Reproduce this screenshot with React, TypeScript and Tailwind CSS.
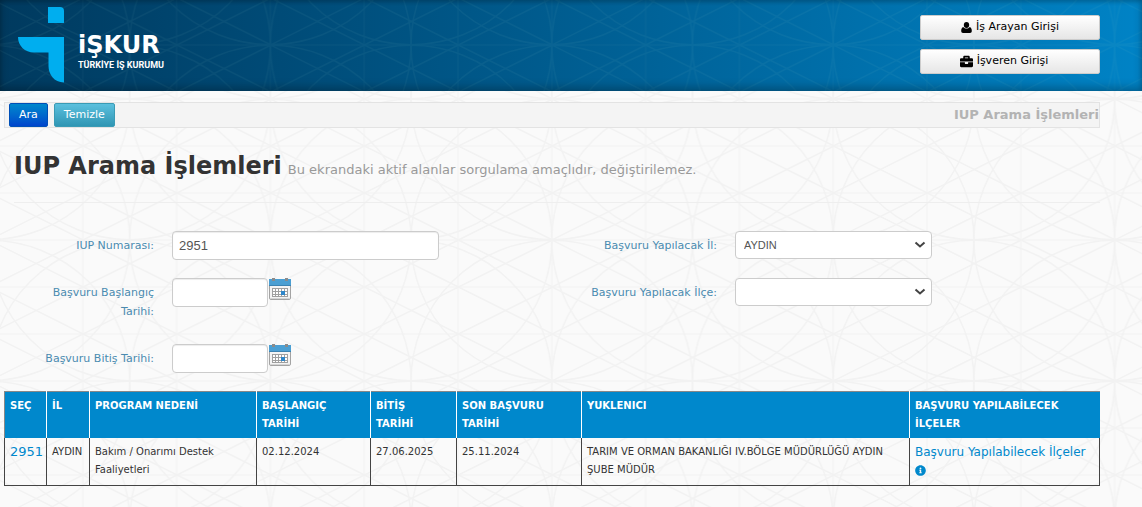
import { useState } from 'react';
import type { ReactNode } from 'react';
import { FaBriefcase, FaInfoCircle } from 'react-icons/fa';

interface Program {
  id: string;
  city: string;
  reason: string;
  startDate: string;
  endDate: string;
  deadline: string;
  contractor: string;
}

const programs: Program[] = [
  {
    id: '2951',
    city: 'AYDIN',
    reason: 'Bakım / Onarımı Destek Faaliyetleri',
    startDate: '02.12.2024',
    endDate: '27.06.2025',
    deadline: '25.11.2024',
    contractor: 'TARIM VE ORMAN BAKANLIĞI IV.BÖLGE MÜDÜRLÜĞÜ AYDIN ŞUBE MÜDÜR',
  },
];

const columns = [
  { title: 'SEÇ', width: 'w-[42px]' },
  { title: 'İL', width: 'w-[43px]' },
  { title: 'PROGRAM NEDENİ', width: 'w-[167px]' },
  { title: 'BAŞLANGIÇ TARİHİ', width: 'w-[114px] pr-4' },
  { title: 'BİTİŞ TARİHİ', width: 'w-[86px] pr-4' },
  { title: 'SON BAŞVURU TARİHİ', width: 'w-[125px]' },
  { title: 'YUKLENICI', width: '' },
  { title: 'BAŞVURU YAPILABİLECEK İLÇELER', width: 'w-[190px]' },
];

// Repeating geometric line ornament, used under the header and the page
function Ornament({ id, top, className }: { id: string; top: number; className: string }) {
  return (
    <svg className={`absolute inset-0 h-full w-full ${className}`} aria-hidden="true">
      <defs>
        <pattern id={id} x="-11" y={top} width="281.4" height="141" patternUnits="userSpaceOnUse">
          <g fill="none" stroke="currentColor">
            <g strokeWidth="1">
              <path d="M0 0V141M93.8 0V141M187.6 0V141M281.4 0V141" />
              <path d="M0 0H282M0 47H282M0 94H282M0 141H282" />
            </g>
            <g strokeWidth="1.5">
              <path d="M0 0L282 141M0 47L188 141M0 94L94 141M94 0L282 94M188 0L282 47" />
              <path d="M282 0L0 141M188 0L0 94M94 0L0 47M282 47L94 141M282 94L188 141" />
              <circle cx="0" cy="0" r="140.7" />
              <circle cx="140.7" cy="0" r="140.7" />
              <circle cx="281.4" cy="0" r="140.7" />
              <circle cx="0" cy="141" r="140.7" />
              <circle cx="140.7" cy="141" r="140.7" />
              <circle cx="281.4" cy="141" r="140.7" />
            </g>
          </g>
        </pattern>
      </defs>
      <rect width="100%" height="100%" fill={`url(#${id})`} />
    </svg>
  );
}

function Logo() {
  return (
    <a href="#" className="flex items-start text-white">
      <svg width="46" height="76" viewBox="0 0 46 76" fill="#00aeef" aria-hidden="true">
        <path d="M30 0h12q4 0 4 4v12H30z" />
        <path d="M0 30h46v45.500C36 75.500 30.500 67 30.500 59V45.500H16C7 45.500 0 39 0 30z" />
      </svg>
      <span className="ml-3.5 mt-6 flex flex-col">
        <span className="text-2xl leading-7 font-bold">iŞKUR</span>
        <span className="mt-px font-[Roboto,sans-serif] text-[9px] leading-2.5 font-bold">TÜRKİYE İŞ KURUMU</span>
      </span>
    </a>
  );
}

function UserIcon() {
  return (
    <svg width="11" height="11" viewBox="0 0 11 11" aria-hidden="true">
      <ellipse cx="5.500" cy="3" rx="2.700" ry="3" />
      <path d="M2.300 5C.8 5.400.2 7 .2 9c0 1.300.7 2 1.800 2h7c1.100 0 1.800-.7 1.800-2 0-2-.6-3.600-2.100-4C7.800 6.100 6.700 6.600 5.500 6.600S3.200 6.100 2.300 5z" />
    </svg>
  );
}

function LoginButton({ icon, className = '', children }: { icon: ReactNode; className?: string; children: ReactNode }) {
  return (
    <button
      type="button"
      className={`flex h-[25px] w-[180px] items-center justify-center gap-1 rounded-xs border border-[#ccc] bg-linear-to-b from-white to-[#e6e6e6] text-[11px] text-black ${className}`}
    >
      {icon}
      {children}
    </button>
  );
}

function CalendarIcon() {
  return (
    <svg width="22" height="22" viewBox="0 0 22 22" aria-hidden="true">
      <rect x="0.500" y="1.500" width="21" height="20" rx="1.500" fill="#f4f4f4" stroke="#a3a3a3" />
      <path d="M0 1h22v6H0z" fill="#4b9fd3" />
      <path d="M0 7h22v1H0z" fill="#3c83b2" />
      <path d="M3 0h3v3H3zM16 0h3v3h-3z" fill="#8b8b8b" />
      <path d="M3 10h16v9H3z" fill="#a0a0a0" />
      <path
        d="M4 11h2v2H4zM7 11h2v2H7zM10 11h2v2h-2zM13 11h2v2h-2zM16 11h2v2h-2zM4 14h2v2H4zM7 14h2v2H7zM10 14h2v2h-2zM16 14h2v2h-2zM4 17h2v1H4zM7 17h2v1H7zM10 17h2v1h-2zM13 17h2v1h-2zM16 17h2v1h-2z"
        fill="#fff"
      />
      <path d="M12 13h4v4h-4z" fill="#2f86c9" />
      <path d="M1 20h20v1H1z" fill="#d5d5d5" />
    </svg>
  );
}

function Field({ id, label, labelWidth, children }: { id: string; label: string; labelWidth: string; children: ReactNode }) {
  return (
    <div className="flex items-start gap-[18px]">
      <label htmlFor={id} className={`${labelWidth} pt-[5px] text-right text-[11px] leading-[19px] text-[#4a8bb0]`}>
        {label}
      </label>
      {children}
    </div>
  );
}

const inputStyle =
  'rounded border border-[#ccc] bg-white px-1.5 font-["Liberation_Sans",Arial,sans-serif] text-[13px] text-[#555] shadow-[inset_0_1px_1px_rgba(0,0,0,0.075)]';

function DateInput({ id }: { id: string }) {
  return (
    <div className="flex items-start">
      <input id={id} type="text" className={`${inputStyle} h-[29px] w-24`} />
      <button type="button" aria-label="Takvim" className="ml-px">
        <CalendarIcon />
      </button>
    </div>
  );
}

function SelectInput({ id, options }: { id: string; options: string[] }) {
  return (
    <div className="relative w-[197px]">
      <select
        id={id}
        className='h-7 w-full appearance-none rounded border border-[#ccc] bg-white px-2 font-["Liberation_Sans",Arial,sans-serif] text-[11px] text-[#555]'
      >
        {options.map(option => (
          <option key={option}>{option}</option>
        ))}
      </select>
      <svg
        className="pointer-events-none absolute top-2.5 right-1.5"
        width="12"
        height="8"
        viewBox="0 0 12 8"
        fill="none"
        stroke="#444"
        strokeWidth="2"
        aria-hidden="true"
      >
        <path d="M1.500 1.500L6 5.500l4.500-4" />
      </svg>
    </div>
  );
}

export default function App() {
  const [number, setNumber] = useState('2951');

  return (
    <div className='relative min-h-screen bg-[#fafafa] font-["DejaVu_Sans",Verdana,sans-serif] text-[#333]'>
      <Ornament id="page-lines" top={99} className="text-[#f2f2f2]" />

      {/* Header */}
      <header className="relative bg-linear-to-r from-[#003a5f] to-[#0083c6]">
        <Ornament id="header-lines" top={45} className="text-[#9fd8d0] opacity-6" />
        <div className="relative flex h-[91px] items-start justify-between pt-[7px] pr-[42px] pl-[18px] shadow-[inset_0_-4px_8px_rgba(0,0,0,0.25),inset_0_2px_4px_rgba(0,0,0,0.2)]">
          <Logo />
          <div className="flex flex-col gap-[9px] pt-2">
            <LoginButton icon={<UserIcon />}>İş Arayan Girişi</LoginButton>
            <LoginButton icon={<FaBriefcase className="size-[13px]" />} className="pr-3">
              İşveren Girişi
            </LoginButton>
          </div>
        </div>
      </header>

      <main className="relative pt-[11px] pr-[42px] pl-1">
        {/* Toolbar */}
        <div className="flex h-[26px] items-center justify-between border border-[#e3e3e3] bg-[#f4f4f4] pl-1">
          <div className="flex gap-1.5">
            <button
              type="button"
              className="h-6 rounded-xs border border-[#0050b8] bg-linear-to-b from-[#0088cc] to-[#0044cc] px-[9px] text-[11px] text-white"
            >
              Ara
            </button>
            <button
              type="button"
              className="h-6 rounded-xs border border-[#3a9bb5] bg-linear-to-b from-[#5bc0de] to-[#2f96b4] px-[9px] text-[11px] text-white"
            >
              Temizle
            </button>
          </div>
          <span className="text-[13px] font-bold text-[#b3b3b3]">IUP Arama İşlemleri</span>
        </div>

        {/* Title */}
        <div className="ml-2.5 flex items-baseline gap-1.5 border-b border-[#eee] pt-[21px] pb-[19px]">
          <h1 className="text-2xl leading-[34px] font-bold">IUP Arama İşlemleri</h1>
          <small className="text-[13px] text-[#999]">Bu ekrandaki aktif alanlar sorgulama amaçlıdır, değiştirilemez.</small>
        </div>

        {/* Search form */}
        <form className="grid grid-cols-2 pt-7" onSubmit={e => e.preventDefault()}>
          <div className="flex flex-col">
            <div className="h-[47px]">
              <Field id="iup-number" label="IUP Numarası:" labelWidth="ml-[30px] w-[120px]">
                <input
                  id="iup-number"
                  type="text"
                  value={number}
                  onChange={e => setNumber(e.target.value)}
                  className={`${inputStyle} h-[29px] w-[267px]`}
                />
              </Field>
            </div>
            <div className="h-[66px]">
              <Field id="start-date" label="Başvuru Başlangıç Tarihi:" labelWidth="ml-[30px] w-[120px]">
                <DateInput id="start-date" />
              </Field>
            </div>
            <div className="h-[47px]">
              <Field id="end-date" label="Başvuru Bitiş Tarihi:" labelWidth="ml-[30px] w-[120px]">
                <DateInput id="end-date" />
              </Field>
            </div>
          </div>
          <div className="flex flex-col">
            <div className="h-[47px]">
              <Field id="city" label="Başvuru Yapılacak İl:" labelWidth="w-[165px]">
                <SelectInput id="city" options={['AYDIN']} />
              </Field>
            </div>
            <Field id="district" label="Başvuru Yapılacak İlçe:" labelWidth="w-[165px]">
              <SelectInput id="district" options={['']} />
            </Field>
          </div>
        </form>

        {/* Results */}
        <table className="w-full table-fixed border-collapse text-left text-[10px] leading-[18px]">
          <thead>
            <tr className="h-[46px] bg-[#0088cc] text-white">
              {columns.map(column => (
                <th
                  key={column.title}
                  className={`border-t border-r border-t-[#888] border-r-white pt-[5px] pb-1 pl-[5px] align-top font-bold first:border-l first:border-l-[#888] last:border-r-0 ${column.width}`}
                >
                  {column.title}
                </th>
              ))}
            </tr>
          </thead>
          <tbody>
            {programs.map(program => (
              <tr
                key={program.id}
                className="h-12 *:border *:border-t-0 *:border-[#444] *:pt-[5px] *:pb-1 *:pl-[5px] *:align-top"
              >
                <td>
                  <a href="#" className="text-[13px] text-[#0088cc]">{program.id}</a>
                </td>
                <td>{program.city}</td>
                <td className="pr-8">{program.reason}</td>
                <td>{program.startDate}</td>
                <td>{program.endDate}</td>
                <td>{program.deadline}</td>
                <td className="pr-1">{program.contractor}</td>
                <td>
                  <a href="#" className="block text-xs leading-[18px] text-[#0088cc]">
                    <span className="block whitespace-nowrap">Başvuru Yapılabilecek İlçeler</span>
                    <FaInfoCircle className="mt-1 size-[11px]" />
                  </a>
                </td>
              </tr>
            ))}
          </tbody>
        </table>
      </main>
    </div>
  );
}
